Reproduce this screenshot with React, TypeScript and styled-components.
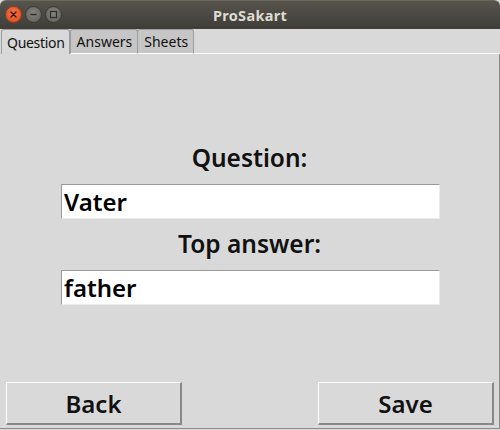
import React from "react";
import styled, { createGlobalStyle } from "styled-components";

const Global = createGlobalStyle`
  html, body { margin: 0; padding: 0; background: #d9d9d9; }
  body { font-family: "Noto Sans", "DejaVu Sans", sans-serif; }
  * { box-sizing: border-box; }
`;

const Window = styled.div`
  width: 500px;
  height: 430px;
  display: flex;
  flex-direction: column;
  background: #d9d9d9;
  overflow: hidden;
`;

const TitleBar = styled.div`
  height: 29px;
  flex: none;
  position: relative;
  display: flex;
  align-items: center;
  justify-content: center;
  background: linear-gradient(#57544d, #3e3d38);
  border-top: 1px solid #6a675f;
  border-radius: 6px 6px 0 0;
`;

const Title = styled.span`
  font-family: "Noto Sans", sans-serif;
  font-weight: 700;
  font-size: 14.5px;
  color: #dfdbd2;
  letter-spacing: 0.3px;
`;

const Controls = styled.div`
  position: absolute;
  left: 5px;
  top: 5px;
  display: flex;
  gap: 3px;
`;

const Dot = styled.div<{ $close?: boolean }>`
  width: 17px;
  height: 17px;
  border-radius: 50%;
  display: flex;
  align-items: center;
  justify-content: center;
  background: ${(p) =>
    p.$close
      ? "radial-gradient(circle at 50% 40%, #f2774a, #d9461b)"
      : "radial-gradient(circle at 50% 40%, #85837d, #5f5d58)"};
  border: 1px solid ${(p) => (p.$close ? "#9c3a1a" : "#3a3935")};
`;

const TabBar = styled.div`
  height: 25px;
  flex: none;
  display: flex;
  align-items: flex-end;
  padding-left: 1px;
  position: relative;
`;

const Tab = styled.div<{ $active?: boolean }>`
  height: 25px;
  padding: ${(p) => (p.$active ? "0 4px 0 5px" : "0 5px 0 6px")};
  display: flex;
  align-items: center;
  font-family: "Noto Sans", sans-serif;
  font-size: 14px;
  letter-spacing: ${(p) => (p.$active ? "-0.3px" : "0")};
  color: #111;
  background: ${(p) => (p.$active ? "#d9d9d9" : "#c6c6c6")};
  border: 1px solid #9c9c9c;
  border-bottom: ${(p) => (p.$active ? "none" : "1px solid #ffffff")};
  border-radius: 3px 3px 0 0;
  margin-right: ${(p) => (p.$active ? "0" : "-1px")};
  z-index: ${(p) => (p.$active ? 2 : 1)};
`;

const TabFill = styled.div`
  flex: 1;
  height: 1px;
  background: #ffffff;
`;

const Panel = styled.div`
  flex: 1;
  margin-bottom: 1px;
  border-right: 1px solid #8c8c8c;
  border-bottom: 1px solid #8c8c8c;
  display: flex;
  flex-direction: column;
  justify-content: space-between;
`;

const Form = styled.div`
  display: flex;
  flex-direction: column;
  align-items: center;
  padding-top: 89px;
`;

const Label = styled.div`
  font-family: "Noto Sans", sans-serif;
  font-weight: 600;
  font-size: 24.5px;
  line-height: 30px;
  color: #111;
  height: 30px;
  margin-bottom: 11px;
`;

const Entry = styled.div`
  width: 379px;
  height: 35px;
  margin: 0 0 10px 2px;
  background: #ffffff;
  border-top: 1px solid #9a9a9a;
  border-left: 1px solid #9a9a9a;
  border-right: 1px solid #ececec;
  border-bottom: 1px solid #ececec;
  padding-left: 2px;
  font-family: "Noto Sans", sans-serif;
  font-weight: 600;
  font-size: 24px;
  line-height: 33px;
  color: #000;
`;

const Footer = styled.div`
  display: flex;
  justify-content: space-between;
  padding: 0 5px 3px 6px;
`;

const Button = styled.div`
  width: 176px;
  height: 43px;
  display: flex;
  align-items: center;
  justify-content: center;
  background: #d9d9d9;
  border-top: 1px solid #ffffff;
  border-left: 1px solid #ffffff;
  border-right: 2px solid #888888;
  border-bottom: 2px solid #888888;
  font-family: "Noto Sans", sans-serif;
  font-weight: 600;
  font-size: 24px;
  color: #111;
`;

export default function App() {
  return (
    <>
      <Global />
      <Window>
        <TitleBar>
          <Controls>
            <Dot $close>
              <svg width="9" height="9" viewBox="0 0 9 9">
                <path d="M2 2 L7 7 M7 2 L2 7" stroke="#3a1206" strokeWidth="1.4" strokeLinecap="round" />
              </svg>
            </Dot>
            <Dot>
              <svg width="9" height="9" viewBox="0 0 9 9">
                <path d="M1.5 4.5 H7.5" stroke="#2e2d2a" strokeWidth="1.4" />
              </svg>
            </Dot>
            <Dot>
              <svg width="9" height="9" viewBox="0 0 9 9">
                <rect x="1.5" y="1.5" width="6" height="6" fill="none" stroke="#2e2d2a" strokeWidth="1.2" />
              </svg>
            </Dot>
          </Controls>
          <Title>ProSakart</Title>
        </TitleBar>
        <TabBar>
          <Tab $active>Question</Tab>
          <Tab>Answers</Tab>
          <Tab>Sheets</Tab>
          <TabFill />
        </TabBar>
        <Panel>
          <Form>
            <Label>Question:</Label>
            <Entry>Vater</Entry>
            <Label>Top answer:</Label>
            <Entry>father</Entry>
          </Form>
          <Footer>
            <Button>Back</Button>
            <Button>Save</Button>
          </Footer>
        </Panel>
      </Window>
    </>
  );
}
